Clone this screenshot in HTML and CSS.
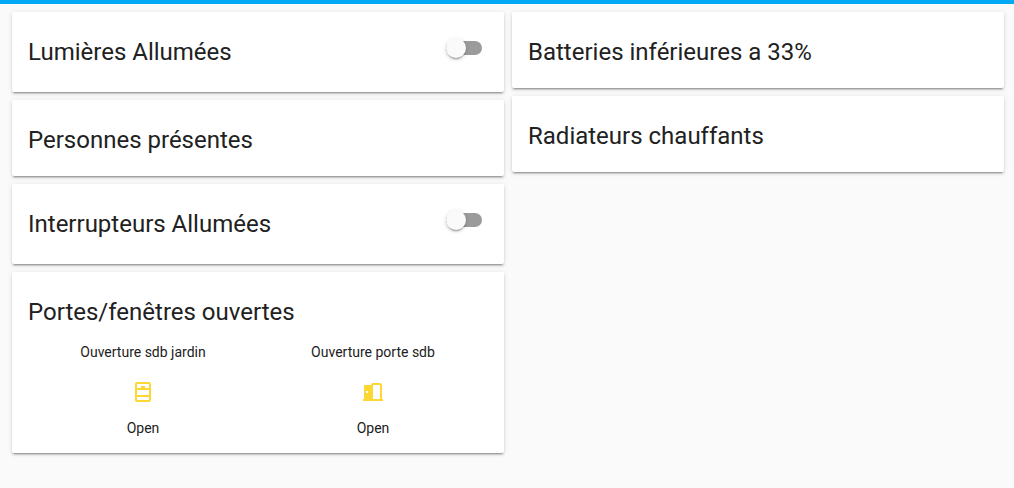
FILE: index.html
```html
<!DOCTYPE html>
<html lang="fr">
<head>
<meta charset="utf-8">
<title>Maison</title>
<link rel="stylesheet" href="styles.css">
</head>
<body>
<main class="view">
  <div class="column">
    <section class="card">
      <header class="card-header">
        <h2 class="card-title" id="lights">Lumières Allumées</h2>
        <input class="switch" type="checkbox" role="switch" aria-labelledby="lights">
      </header>
    </section>
    <section class="card">
      <header class="card-header"><h2 class="card-title">Personnes présentes</h2></header>
    </section>
    <section class="card">
      <header class="card-header">
        <h2 class="card-title" id="switches">Interrupteurs Allumées</h2>
        <input class="switch" type="checkbox" role="switch" aria-labelledby="switches">
      </header>
    </section>
    <section class="card">
      <header class="card-header card-header-compact"><h2 class="card-title">Portes/fenêtres ouvertes</h2></header>
      <div class="glance">
        <div class="entity">
          <span>Ouverture sdb jardin</span>
          <svg class="icon" viewBox="0 0 24 24" aria-hidden="true"><path d="M6 2H18A2 2 0 0 1 20 4V20A2 2 0 0 1 18 22H6A2 2 0 0 1 4 20V4A2 2 0 0 1 6 2M6 4V8H10V6H14V8H18V4H6M6 10V15H18V10H6M6 17V20H18V17H6Z"/></svg>
          <span>Open</span>
        </div>
        <div class="entity">
          <span>Ouverture porte sdb</span>
          <svg class="icon" viewBox="0 0 24 24" aria-hidden="true"><path d="M12 3C10.89 3 10 3.89 10 5H3V19H2V21H22V19H21V5C21 3.89 20.11 3 19 3H12M12 5H19V19H12V5M5 11H7V13H5V11Z"/></svg>
          <span>Open</span>
        </div>
      </div>
    </section>
  </div>
  <div class="column">
    <section class="card">
      <header class="card-header"><h2 class="card-title">Batteries inférieures a 33%</h2></header>
    </section>
    <section class="card">
      <header class="card-header"><h2 class="card-title">Radiateurs chauffants</h2></header>
    </section>
  </div>
</main>
</body>
</html>
```
FILE: styles.css
```css
* { box-sizing: border-box; }
body {
  margin: 0;
  min-height: 100vh;
  border-top: 4px solid #03a9f4;
  background: #fafafa;
  color: #212121;
  font: 14px/20px Roboto, sans-serif;
}
.view {
  display: grid;
  grid-template-columns: 1fr 1fr;
  gap: 8px;
  padding: 8px 10px 8px 12px;
}
.column {
  display: flex;
  flex-direction: column;
  gap: 8px;
}
.card {
  background: #fff;
  border-radius: 2px;
  box-shadow: 0 2px 2px 0 rgba(0, 0, 0, 0.14), 0 1px 5px 0 rgba(0, 0, 0, 0.12), 0 3px 1px -2px rgba(0, 0, 0, 0.2);
}
.card-header {
  display: flex;
  justify-content: space-between;
  padding: 20px 16px 16px;
}
.card-header-compact { padding-bottom: 10px; }
.card-title {
  margin: 0;
  font-size: 24px;
  font-weight: 400;
  line-height: 40px;
}
.switch {
  appearance: none;
  position: relative;
  width: 36px;
  height: 14px;
  margin: 9px 6px 21px 0;
  border-radius: 7px;
  background: #9b9b9b;
}
.switch::before {
  content: "";
  position: absolute;
  top: -3px;
  left: 0;
  width: 20px;
  height: 20px;
  border-radius: 50%;
  background: #fafafa;
  box-shadow: 0 2px 2px 0 rgba(0, 0, 0, 0.14), 0 1px 5px 0 rgba(0, 0, 0, 0.12), 0 3px 1px -2px rgba(0, 0, 0, 0.2);
}
.switch:checked::before { left: 16px; }
.glance {
  display: grid;
  grid-template-columns: 1fr 1fr;
  padding: 0 16px 15px;
}
.entity {
  display: flex;
  flex-direction: column;
  align-items: center;
}
.icon {
  width: 24px;
  height: 24px;
  margin: 18px 0 14px;
  fill: #fdd835;
}
```
